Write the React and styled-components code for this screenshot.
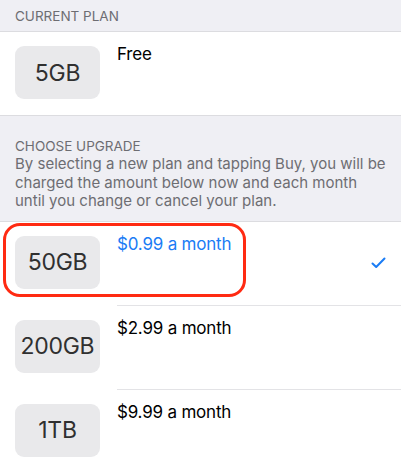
import React from "react";
import styled, { createGlobalStyle } from "styled-components";

const GlobalStyle = createGlobalStyle`
  * {
    box-sizing: border-box;
  }
  body {
    margin: 0;
    background: #efeff4;
    font-family: Inter, "Liberation Sans", Arial, sans-serif;
    -webkit-font-smoothing: antialiased;
  }
`;

const Page = styled.div`
  width: 401px;
  height: 458px;
  overflow: hidden;
  background: #efeff4;
`;

const SectionHeader = styled.div`
  padding: ${(p) => p.$top}px 4px ${(p) => p.$bottom}px 15px;
  color: #6d6d72;
`;

const HeaderTitle = styled.div`
  text-transform: uppercase;
  font-size: 13.5px;
  line-height: 18px;
`;

const HeaderNote = styled.div`
  font-size: 15px;
  line-height: 18.5px;
  letter-spacing: 0;
  white-space: nowrap;
`;

const Group = styled.div`
  background: #fff;
  border-top: 1px solid #dcdce0;
  border-bottom: ${(p) => (p.$open ? "none" : "1px solid #dcdce0")};
`;

const Row = styled.div`
  position: relative;
  display: flex;
  align-items: flex-start;
`;

const Tile = styled.div`
  flex: none;
  width: 85px;
  height: 53px;
  margin: 14px 17px 0 15px;
  border-radius: 9px;
  background: #e9e9eb;
  color: #303030;
  font-size: 23px;
  letter-spacing: -0.3px;
  display: flex;
  align-items: center;
  justify-content: center;
`;

const Body = styled.div`
  flex: 1;
  height: ${(p) => p.$h}px;
  display: flex;
  align-items: flex-start;
  justify-content: space-between;
  padding: 11px 15px 0 0;
  border-bottom: ${(p) => (p.$sep ? "1px solid #e3e3e6" : "none")};
`;

const Price = styled.div`
  font-size: 17px;
  line-height: 22px;
  letter-spacing: -0.2px;
  color: ${(p) => (p.$active ? "#1a7cf5" : "#000")};
`;

const Check = styled.svg`
  align-self: center;
  margin-top: -11px;
`;

const Highlight = styled.div`
  position: absolute;
  left: 3px;
  top: 1px;
  width: 243px;
  height: 74px;
  border: 3px solid #ff2a12;
  border-radius: 17px;
  pointer-events: none;
`;

const plans = [
  { size: "50GB", price: "$0.99 a month", active: true },
  { size: "200GB", price: "$2.99 a month" },
  { size: "1TB", price: "$9.99 a month" },
];

const App = () => {
  return (
    <Page>
      <GlobalStyle />
      <SectionHeader $top={7} $bottom={6}>
        <HeaderTitle>Current Plan</HeaderTitle>
      </SectionHeader>
      <Group>
        <Row>
          <Tile>5GB</Tile>
          <Body $h={83}>
            <Price>Free</Price>
          </Body>
        </Row>
      </Group>
      <SectionHeader $top={21} $bottom={10}>
        <HeaderTitle>Choose Upgrade</HeaderTitle>
        <HeaderNote>
          By selecting a new plan and tapping Buy, you will be
          <br />
          charged the amount below now and each month
          <br />
          until you change or cancel your plan.
        </HeaderNote>
      </SectionHeader>
      <Group $open>
        {plans.map((plan, i) => (
          <Row key={plan.size}>
            <Tile>{plan.size}</Tile>
            <Body $h={84} $sep={i < plans.length - 1}>
              <Price $active={plan.active}>{plan.price}</Price>
              {plan.active && (
                <Check width="15" height="12" viewBox="0 0 15 12">
                  <polyline
                    points="1.5,6.5 5.2,10 13.5,1.5"
                    fill="none"
                    stroke="#1a7cf5"
                    strokeWidth="2"
                    strokeLinecap="round"
                    strokeLinejoin="round"
                  />
                </Check>
              )}
            </Body>
            {plan.active && <Highlight />}
          </Row>
        ))}
      </Group>
    </Page>
  );
};

export default App;
